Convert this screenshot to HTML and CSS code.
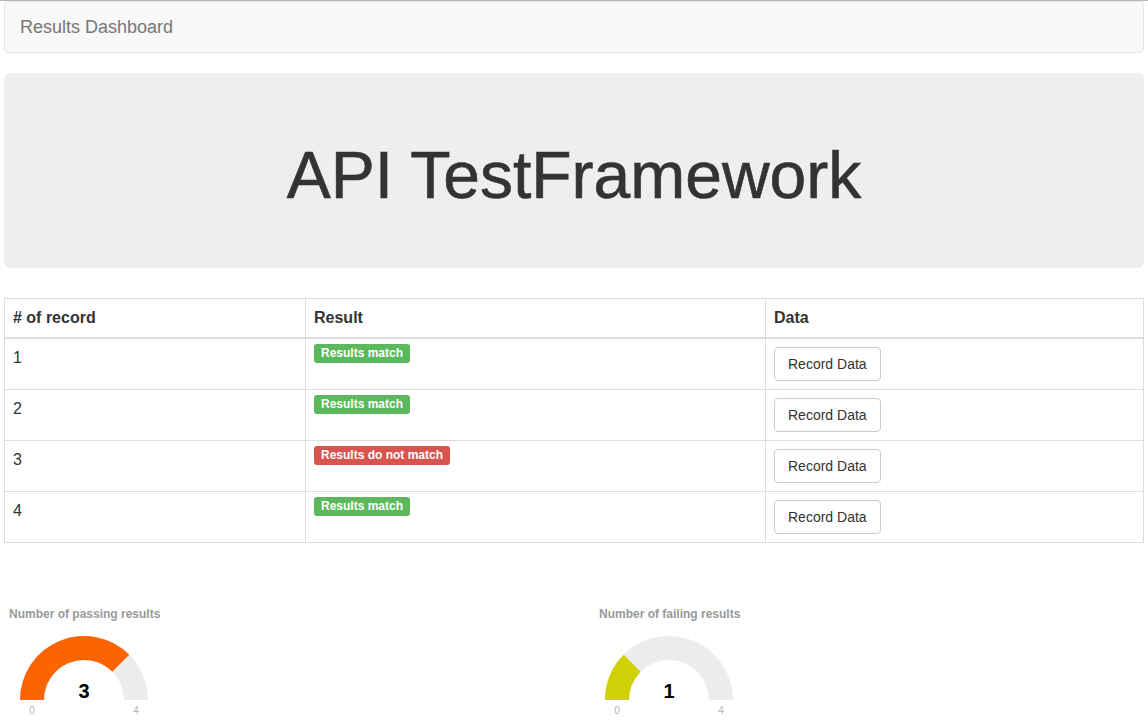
FILE: index.html
```html
<!DOCTYPE html>
<html>
<head>
<meta charset="utf-8">
<title>Results Dashboard</title>
<link rel="stylesheet" href="styles.css">
</head>
<body>
<div class="topline"></div>
<div class="page">
  <nav class="navbar"><span class="brand">Results Dashboard</span></nav>
  <div class="jumbotron"><h1>API TestFramework</h1></div>
  <table class="results">
    <thead>
      <tr><th class="c1"># of record</th><th class="c2">Result</th><th>Data</th></tr>
    </thead>
    <tbody>
      <tr><td>1</td><td><span class="label ok">Results match</span></td><td><button class="btn">Record Data</button></td></tr>
      <tr><td>2</td><td><span class="label ok">Results match</span></td><td><button class="btn">Record Data</button></td></tr>
      <tr><td>3</td><td><span class="label bad">Results do not match</span></td><td><button class="btn">Record Data</button></td></tr>
      <tr><td>4</td><td><span class="label ok">Results match</span></td><td><button class="btn">Record Data</button></td></tr>
    </tbody>
  </table>
  <div class="gauges">
    <div class="gauge">
      <div class="gtitle">Number of passing results</div>
      <svg class="gsvg" width="180" height="100" viewBox="0 0 180 100">
        <path d="M16,80 A64,64 0 0 1 144,80 L120,80 A40,40 0 0 0 40,80 Z" fill="#edebeb"/>
        <path d="M16,80 A64,64 0 0 1 125.25,34.75 L108.28,51.72 A40,40 0 0 0 40,80 Z" fill="#fc6401"/>
        <text x="80" y="78" class="gval" text-anchor="middle">3</text>
        <text x="28" y="94" class="glab" text-anchor="middle">0</text>
        <text x="132" y="94" class="glab" text-anchor="middle">4</text>
      </svg>
    </div>
    <div class="gauge">
      <div class="gtitle">Number of failing results</div>
      <svg class="gsvg" width="180" height="100" viewBox="0 0 180 100">
        <path d="M11,80 A64,64 0 0 1 139,80 L115,80 A40,40 0 0 0 35,80 Z" fill="#edebeb"/>
        <path d="M11,80 A64,64 0 0 1 29.75,34.75 L46.72,51.72 A40,40 0 0 0 35,80 Z" fill="#d1cf06"/>
        <text x="75" y="78" class="gval" text-anchor="middle">1</text>
        <text x="23" y="94" class="glab" text-anchor="middle">0</text>
        <text x="127" y="94" class="glab" text-anchor="middle">4</text>
      </svg>
    </div>
  </div>
</div>
</body>
</html>
```
FILE: styles.css
```css
* { box-sizing: border-box; }
html, body { margin: 0; padding: 0; background: #fff; }
body {
  font-family: "Liberation Sans", Arial, Helvetica, sans-serif;
  font-size: 14px;
  line-height: 20px;
  color: #333;
  overflow: hidden;
}
.topline { height: 1px; background: #b5b5b5; }
.page { padding: 0 4px; }
.navbar {
  height: 52px;
  background: #f8f8f8;
  border: 1px solid #e7e7e7;
  border-radius: 4px;
  margin-bottom: 20px;
  padding: 0 15px;
  display: flex;
  align-items: center;
}
.brand { font-size: 18px; line-height: 20px; color: #777; }
.jumbotron {
  background: #eee;
  border-radius: 6px;
  padding: 48px 60px;
  margin-bottom: 30px;
  text-align: center;
}
.jumbotron h1 {
  margin: 20px 0 10px;
  font-size: 66px;
  line-height: 69px;
  font-weight: 500;
  color: #333;
  -webkit-text-stroke: 0.6px #333;
}
.results {
  width: 100%;
  border-collapse: collapse;
  border: 1px solid #ddd;
}
.results th, .results td {
  border: 1px solid #ddd;
  padding: 8px;
  text-align: left;
  vertical-align: top;
  font-size: 16px;
  line-height: 22px;
}
.results th { font-weight: bold; border-bottom-width: 2px; }
.results td { height: 51px; }
.c1 { width: 301px; }
.c2 { width: 460px; }
.label {
  display: inline-block;
  font-size: 12px;
  font-weight: bold;
  line-height: 12px;
  color: #fff;
  padding: 3px 7px 4px;
  border-radius: 3px;
  margin-top: -3px;
  vertical-align: top;
}
.ok { background: #5cb85c; }
.bad { background: #d9534f; }
.btn {
  font-family: inherit;
  font-size: 14px;
  line-height: 20px;
  color: #333;
  background: #fff;
  border: 1px solid #ccc;
  border-radius: 4px;
  padding: 6px 13px;
  height: 34px;
  display: block;
}
.gauges {
  margin-top: 64px;
  display: grid;
  grid-template-columns: 590px 1fr;
}
.gtitle {
  padding-left: 5px;
  font-size: 12px;
  line-height: 14px;
  font-weight: bold;
  color: #999;
}
.gsvg { display: block; margin-top: -1px; }
.gval { font-family: "Liberation Sans", Arial, sans-serif; font-size: 20px; font-weight: bold; fill: #010101; }
.glab { font-family: "Liberation Sans", Arial, sans-serif; font-size: 10px; fill: #b3b3b3; }
```
